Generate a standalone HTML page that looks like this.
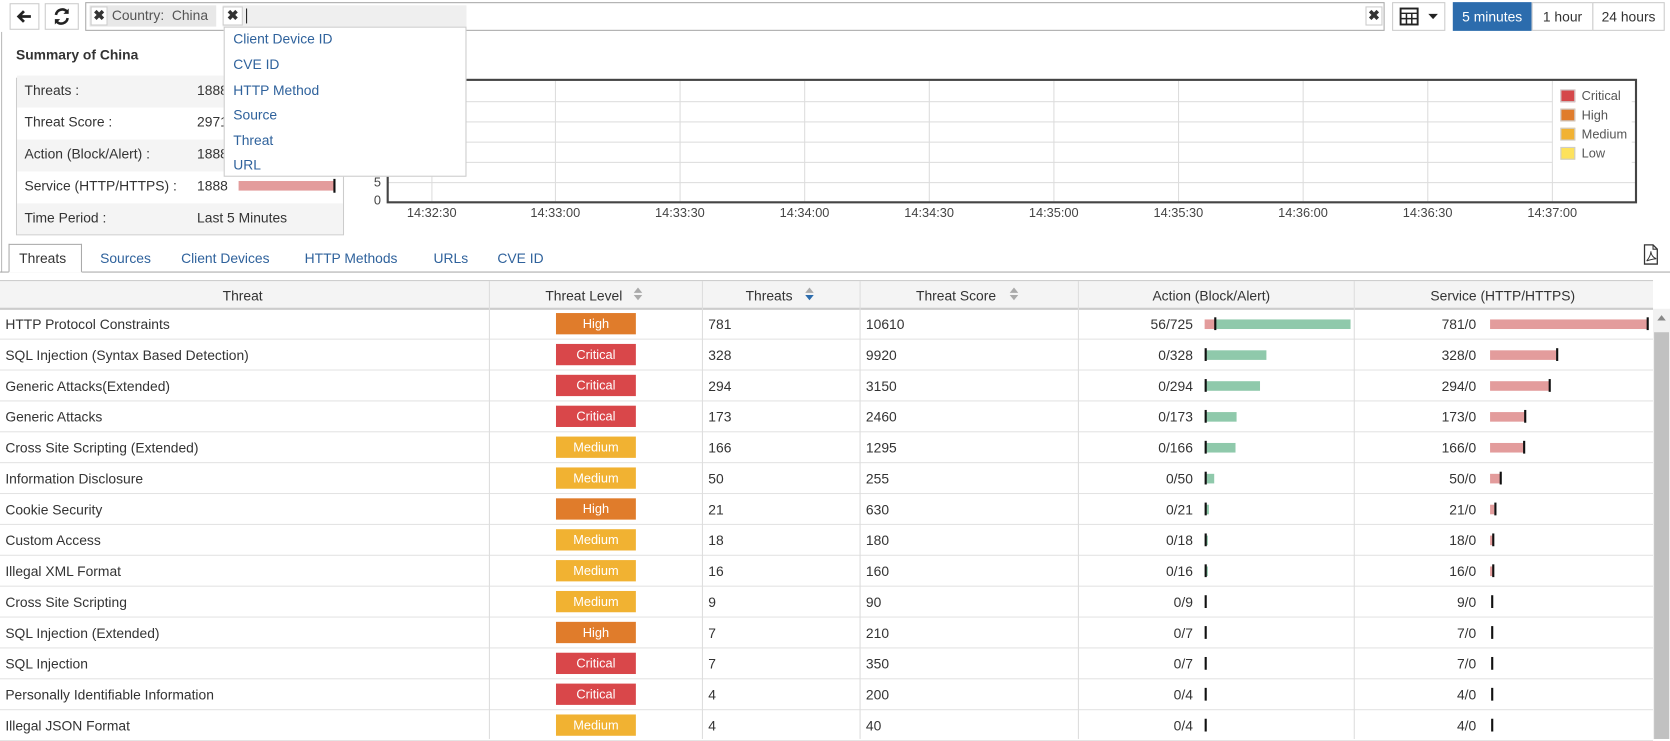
<!DOCTYPE html>
<html><head><meta charset="utf-8"><style>
*{box-sizing:border-box;margin:0;padding:0}
html,body{width:1670px;height:739px;overflow:hidden;background:#fff}
#w{position:absolute;left:0;top:0;width:1568px;height:694px;transform:scale(1.0651,1.0648);transform-origin:0 0;font-family:"Liberation Sans",sans-serif;font-size:13px;color:#333}
.a{position:absolute}
.btn{position:absolute;border:1px solid #ccc;background:#fff}
.lk{color:#2f629c}
.r{position:absolute;left:0;width:1552px;height:29px;border-bottom:1px solid #e3e3e3}
.r div{position:absolute;top:7px;white-space:nowrap}
.c1{left:5px}.c3{left:665px}.c4{left:813px}
.c5{right:432px;text-align:right}.c6{right:166px;text-align:right}
.bd{left:522px!important;top:4px!important;width:75px;height:20px;color:#fff;text-align:center;line-height:20px;font-size:12px}
.H{background:#e07c2b}.C{background:#d9474a}.M{background:#f1b232}
.g{height:9px;top:10px!important;background:#8fc9ab}
.p{height:9px;top:10px!important;background:#e39c9c}
.t{width:1.5px;height:12px;top:8px!important;background:#111}
.vl{position:absolute;top:264px;width:1px;height:430px;background:#ddd}
.hl{position:absolute;left:364px;width:1172px;height:1px;background:#ddd}
.gv{position:absolute;top:76px;height:113px;width:1px;background:#ddd}
.xl{position:absolute;top:193px;font-size:12px;color:#444}
.sr{position:absolute;left:16px;width:306px;height:30px;padding:6px 0 0 7px}
.sr span{position:absolute;left:169px}
</style></head><body><div id="w">

<!-- toolbar -->
<div class="btn" style="left:9px;top:3px;width:28px;height:25px"><svg width="26" height="23" viewBox="0 0 26 23"><path d="M19 11.5H8M12.5 6.5L7.5 11.5L12.5 16.5" stroke="#222" stroke-width="2.6" fill="none"/></svg></div>
<div class="btn" style="left:42px;top:3px;width:32px;height:25px"><svg width="30" height="23" viewBox="0 0 30 23"><path d="M9.5 10a6 6 0 0 1 10.5-3M20.5 13a6 6 0 0 1-10.5 3" stroke="#222" stroke-width="2.4" fill="none"/><path d="M21.5 4v5h-5zM8.5 19v-5h5z" fill="#222"/></svg></div>
<div class="btn" style="left:80px;top:2px;width:1220px;height:27px;border-color:#aaa"></div>
<div class="a" style="left:84px;top:5px;width:119px;height:20px;background:#e8e8e8"></div>
<div class="a" style="left:85px;top:6px;width:16px;height:18px;background:#fff;border:1px solid #ccc;font-weight:bold;font-size:13px;text-align:center;line-height:16px">✖</div>
<div class="a" style="left:105px;top:7px;color:#555">Country:&nbsp; China</div>
<div class="a" style="left:209px;top:5px;width:229px;height:20px;background:#efefef"></div>
<div class="a" style="left:209px;top:6px;width:19px;height:18px;background:#fff;border:1px solid #ccc;font-weight:bold;text-align:center;line-height:16px">✖</div>
<div class="a" style="left:231px;top:8px;width:1px;height:14px;background:#222"></div>
<div class="a" style="left:1282px;top:6px;width:16px;height:18px;background:#fff;border:1px solid #ccc;font-weight:bold;text-align:center;line-height:16px">✖</div>
<div class="btn" style="left:1307px;top:2px;width:50px;height:27px"><svg width="48" height="25" viewBox="0 0 48 25"><rect x="7" y="5" width="16" height="15" fill="none" stroke="#222" stroke-width="1.8"/><path d="M7 9.5h16M7 14.5h16M12.5 9.5v10M17.5 9.5v10" stroke="#222" stroke-width="1.4"/><path d="M33 10h9l-4.5 5z" fill="#222"/></svg></div>
<div class="a" style="left:1364px;top:2px;width:74px;height:27px;background:#2c6cad;color:#fff;text-align:center;line-height:27px">5 minutes</div>
<div class="btn" style="left:1438px;top:2px;width:58px;height:27px;text-align:center;line-height:25px">1 hour</div>
<div class="btn" style="left:1495px;top:2px;width:68px;height:27px;text-align:center;line-height:25px">24 hours</div>

<div class="a" style="left:1px;top:30px;width:1px;height:226px;background:#bbb"></div>
<div class="a" style="left:15px;top:44px;font-weight:bold">Summary of China</div>

<!-- summary -->
<div class="a" style="left:15px;top:73px;width:308px;height:148px;border:1px solid #ccc"></div>
<div class="sr" style="top:71px;background:#f4f4f4">Threats :<span>1888</span></div>
<div class="sr" style="top:101px">Threat Score :<span>29710</span></div>
<div class="sr" style="top:131px;background:#f4f4f4">Action (Block/Alert) :<span>1888</span></div>
<div class="sr" style="top:161px">Service (HTTP/HTTPS) :<span>1888</span></div>
<div class="a" style="left:224px;top:170px;width:90px;height:9px;background:#e39c9c"></div>
<div class="a" style="left:313px;top:168px;width:1.5px;height:13px;background:#111"></div>
<div class="sr" style="top:191px;background:#f4f4f4;height:29px">Time Period :<span>Last 5 Minutes</span></div>

<!-- chart -->
<div class="hl" style="top:95px"></div><div class="hl" style="top:114px"></div><div class="hl" style="top:133px"></div><div class="hl" style="top:152px"></div><div class="hl" style="top:171px"></div>
<div class="gv" style="left:405px"></div><div class="gv" style="left:521px"></div><div class="gv" style="left:638px"></div><div class="gv" style="left:755px"></div><div class="gv" style="left:872px"></div><div class="gv" style="left:989px"></div><div class="gv" style="left:1106px"></div><div class="gv" style="left:1223px"></div><div class="gv" style="left:1340px"></div><div class="gv" style="left:1457px"></div>
<div class="a" style="left:363px;top:74px;width:1174px;height:117px;border:2px solid #444"></div>
<div class="a" style="left:351px;top:164px;font-size:12px;color:#444">5</div>
<div class="a" style="left:351px;top:181px;font-size:12px;color:#444">0</div>
<div class="xl" style="left:382px">14:32:30</div><div class="xl" style="left:498px">14:33:00</div><div class="xl" style="left:615px">14:33:30</div><div class="xl" style="left:732px">14:34:00</div><div class="xl" style="left:849px">14:34:30</div><div class="xl" style="left:966px">14:35:00</div><div class="xl" style="left:1083px">14:35:30</div><div class="xl" style="left:1200px">14:36:00</div><div class="xl" style="left:1317px">14:36:30</div><div class="xl" style="left:1434px">14:37:00</div>
<div class="a" style="left:1458px;top:80px;width:74px;height:74px;background:#fff"></div>
<div class="a" style="left:1465px;top:84px;width:14px;height:12px;background:#d5474a;border:1px solid #ccc"></div><div class="a" style="left:1485px;top:83px;font-size:12px;color:#555">Critical</div>
<div class="a" style="left:1465px;top:102px;width:14px;height:12px;background:#e07c2b;border:1px solid #ccc"></div><div class="a" style="left:1485px;top:101px;font-size:12px;color:#555">High</div>
<div class="a" style="left:1465px;top:120px;width:14px;height:12px;background:#f1b232;border:1px solid #ccc"></div><div class="a" style="left:1485px;top:119px;font-size:12px;color:#555">Medium</div>
<div class="a" style="left:1465px;top:138px;width:14px;height:12px;background:#fde25c;border:1px solid #ccc"></div><div class="a" style="left:1485px;top:137px;font-size:12px;color:#555">Low</div>

<!-- dropdown -->
<div class="a" style="left:210px;top:25px;width:228px;height:141px;background:#fff;border:1px solid #ccc"></div>
<div class="a lk" style="left:219px;top:29px">Client Device ID</div>
<div class="a lk" style="left:219px;top:53px">CVE ID</div>
<div class="a lk" style="left:219px;top:77px">HTTP Method</div>
<div class="a lk" style="left:219px;top:100px">Source</div>
<div class="a lk" style="left:219px;top:124px">Threat</div>
<div class="a lk" style="left:219px;top:147px">URL</div>

<!-- tabs -->
<div class="a" style="left:0;top:255px;width:1568px;height:1px;background:#aaa"></div>
<div class="a" style="left:8px;top:229px;width:69px;height:27px;border:1px solid #aaa;border-bottom:1px solid #fff;background:#fff"></div>
<div class="a" style="left:18px;top:235px">Threats</div>
<div class="a lk" style="left:94px;top:235px">Sources</div>
<div class="a lk" style="left:170px;top:235px">Client Devices</div>
<div class="a lk" style="left:286px;top:235px">HTTP Methods</div>
<div class="a lk" style="left:407px;top:235px">URLs</div>
<div class="a lk" style="left:467px;top:235px">CVE ID</div>
<svg class="a" style="left:1542px;top:229px" width="16" height="20" viewBox="0 0 16 20"><path d="M2 1h8l4 4v14H2z" fill="none" stroke="#333" stroke-width="1.2"/><path d="M10 1v4h4" fill="none" stroke="#333" stroke-width="1"/><path d="M4 16c2-2 4-6 4-9 0 3 2 6 5 7-3 0-6 1-9 2" fill="none" stroke="#333" stroke-width="0.9"/></svg>

<!-- table header -->
<div class="a" style="left:0;top:263px;width:1552px;height:28px;background:#f4f4f4;border-top:1px solid #ccc;border-bottom:2px solid #ccc"></div>
<div class="a" style="left:209px;top:270px">Threat</div>
<div class="a" style="left:512px;top:270px">Threat Level</div>
<div class="a" style="left:700px;top:270px">Threats</div>
<div class="a" style="left:860px;top:270px">Threat Score</div>
<div class="a" style="left:1082px;top:270px">Action (Block/Alert)</div>
<div class="a" style="left:1343px;top:270px">Service (HTTP/HTTPS)</div>
<svg class="a" style="left:594px;top:269px" width="10" height="14"><path d="M1 6l4-5 4 5zM1 8l4 5 4-5z" fill="#aaa"/></svg>
<svg class="a" style="left:755px;top:269px" width="10" height="14"><path d="M1 6l4-5 4 5z" fill="#aaa"/><path d="M1 8l4 5 4-5z" fill="#2c6cad"/></svg>
<svg class="a" style="left:947px;top:269px" width="10" height="14"><path d="M1 6l4-5 4 5zM1 8l4 5 4-5z" fill="#aaa"/></svg>

<!-- rows -->
<div class="r" style="top:290px"><div class="c1">HTTP Protocol Constraints</div><div class="bd H">High</div><div class="c3">781</div><div class="c4">10610</div><div class="c5">56/725</div><div class="p" style="left:1131px;width:10px"></div><div class="g" style="left:1141px;width:127px"></div><div class="t" style="left:1140px"></div><div class="c6">781/0</div><div class="p" style="left:1399px;width:148px"></div><div class="t" style="left:1546px"></div></div>
<div class="r" style="top:319px"><div class="c1">SQL Injection (Syntax Based Detection)</div><div class="bd C">Critical</div><div class="c3">328</div><div class="c4">9920</div><div class="c5">0/328</div><div class="g" style="left:1131px;width:57.5px"></div><div class="t" style="left:1131px"></div><div class="c6">328/0</div><div class="p" style="left:1399px;width:62px"></div><div class="t" style="left:1461px"></div></div>
<div class="r" style="top:348px"><div class="c1">Generic Attacks(Extended)</div><div class="bd C">Critical</div><div class="c3">294</div><div class="c4">3150</div><div class="c5">0/294</div><div class="g" style="left:1131px;width:51.6px"></div><div class="t" style="left:1131px"></div><div class="c6">294/0</div><div class="p" style="left:1399px;width:55.7px"></div><div class="t" style="left:1454px"></div></div>
<div class="r" style="top:377px"><div class="c1">Generic Attacks</div><div class="bd C">Critical</div><div class="c3">173</div><div class="c4">2460</div><div class="c5">0/173</div><div class="g" style="left:1131px;width:30.3px"></div><div class="t" style="left:1131px"></div><div class="c6">173/0</div><div class="p" style="left:1399px;width:32.8px"></div><div class="t" style="left:1431px"></div></div>
<div class="r" style="top:406px"><div class="c1">Cross Site Scripting (Extended)</div><div class="bd M">Medium</div><div class="c3">166</div><div class="c4">1295</div><div class="c5">0/166</div><div class="g" style="left:1131px;width:29.1px"></div><div class="t" style="left:1131px"></div><div class="c6">166/0</div><div class="p" style="left:1399px;width:31.5px"></div><div class="t" style="left:1430px"></div></div>
<div class="r" style="top:435px"><div class="c1">Information Disclosure</div><div class="bd M">Medium</div><div class="c3">50</div><div class="c4">255</div><div class="c5">0/50</div><div class="g" style="left:1131px;width:8.8px"></div><div class="t" style="left:1131px"></div><div class="c6">50/0</div><div class="p" style="left:1399px;width:9.5px"></div><div class="t" style="left:1408px"></div></div>
<div class="r" style="top:464px"><div class="c1">Cookie Security</div><div class="bd H">High</div><div class="c3">21</div><div class="c4">630</div><div class="c5">0/21</div><div class="g" style="left:1131px;width:3.7px"></div><div class="t" style="left:1131px"></div><div class="c6">21/0</div><div class="p" style="left:1399px;width:4px"></div><div class="t" style="left:1403px"></div></div>
<div class="r" style="top:493px"><div class="c1">Custom Access</div><div class="bd M">Medium</div><div class="c3">18</div><div class="c4">180</div><div class="c5">0/18</div><div class="g" style="left:1131px;width:3.2px"></div><div class="t" style="left:1131px"></div><div class="c6">18/0</div><div class="p" style="left:1399px;width:3.4px"></div><div class="t" style="left:1401px"></div></div>
<div class="r" style="top:522px"><div class="c1">Illegal XML Format</div><div class="bd M">Medium</div><div class="c3">16</div><div class="c4">160</div><div class="c5">0/16</div><div class="g" style="left:1131px;width:2.8px"></div><div class="t" style="left:1131px"></div><div class="c6">16/0</div><div class="p" style="left:1399px;width:3px"></div><div class="t" style="left:1401px"></div></div>
<div class="r" style="top:551px"><div class="c1">Cross Site Scripting</div><div class="bd M">Medium</div><div class="c3">9</div><div class="c4">90</div><div class="c5">0/9</div><div class="t" style="left:1131px"></div><div class="c6">9/0</div><div class="t" style="left:1400px"></div></div>
<div class="r" style="top:580px"><div class="c1">SQL Injection (Extended)</div><div class="bd H">High</div><div class="c3">7</div><div class="c4">210</div><div class="c5">0/7</div><div class="t" style="left:1131px"></div><div class="c6">7/0</div><div class="t" style="left:1400px"></div></div>
<div class="r" style="top:609px"><div class="c1">SQL Injection</div><div class="bd C">Critical</div><div class="c3">7</div><div class="c4">350</div><div class="c5">0/7</div><div class="t" style="left:1131px"></div><div class="c6">7/0</div><div class="t" style="left:1400px"></div></div>
<div class="r" style="top:638px"><div class="c1">Personally Identifiable Information</div><div class="bd C">Critical</div><div class="c3">4</div><div class="c4">200</div><div class="c5">0/4</div><div class="t" style="left:1131px"></div><div class="c6">4/0</div><div class="t" style="left:1400px"></div></div>
<div class="r" style="top:667px"><div class="c1">Illegal JSON Format</div><div class="bd M">Medium</div><div class="c3">4</div><div class="c4">40</div><div class="c5">0/4</div><div class="t" style="left:1131px"></div><div class="c6">4/0</div><div class="t" style="left:1400px"></div></div>

<div class="vl" style="left:459px"></div><div class="vl" style="left:659px"></div><div class="vl" style="left:807px"></div><div class="vl" style="left:1012px"></div><div class="vl" style="left:1271px"></div>

<!-- scrollbar -->
<div class="a" style="left:1552px;top:290px;width:16px;height:404px;background:#f1f1f1"></div>
<div class="a" style="left:1553px;top:312px;width:14px;height:382px;background:#c1c1c1"></div>
<svg class="a" style="left:1555px;top:294px" width="10" height="8"><path d="M1 7l4-5 4 5z" fill="#888"/></svg>
</div></body></html>
